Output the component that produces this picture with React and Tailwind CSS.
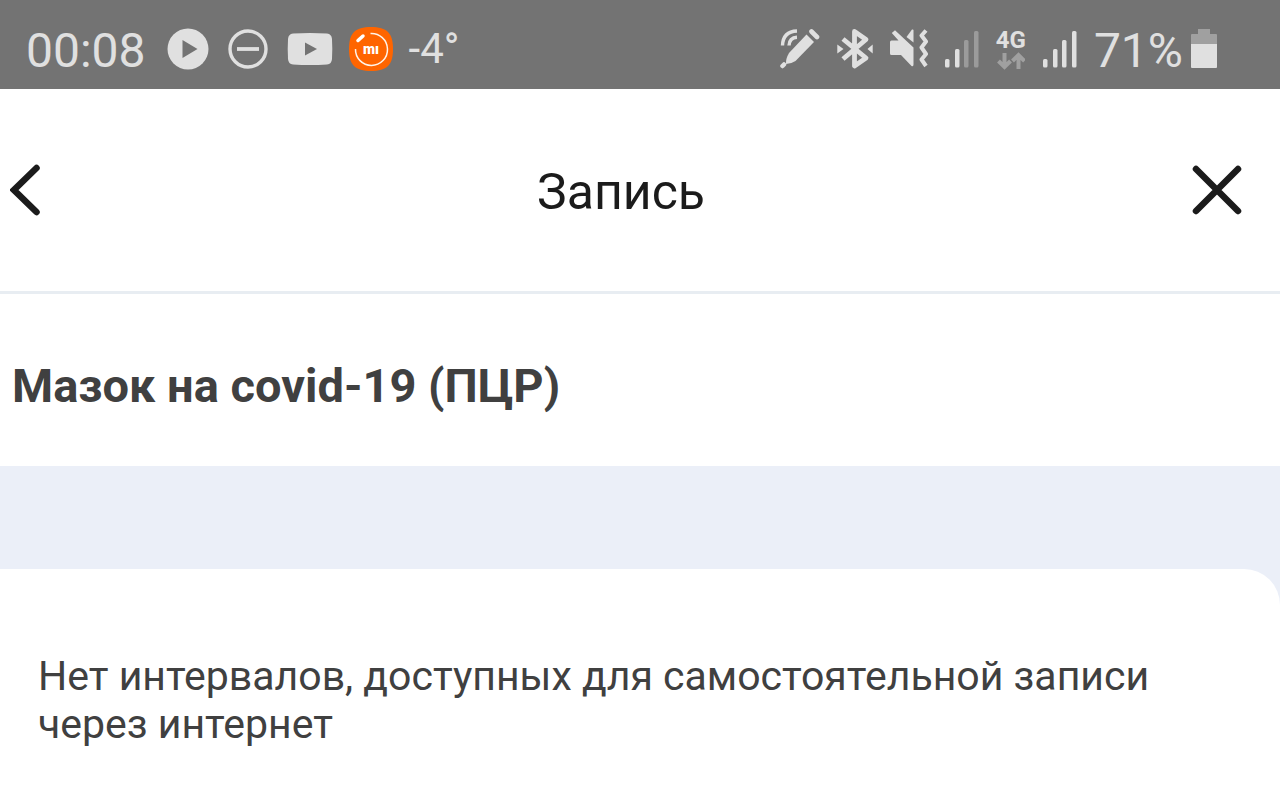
const PlayIcon = () => (
  <svg viewBox="0 0 42 42" className="size-[42px]" aria-hidden="true">
    <circle cx="21" cy="21" r="20.5" fill="#e0e0e0" />
    <path d="M15.5 12v18l15-9z" fill="#737373" />
  </svg>
);

const DoNotDisturbIcon = () => (
  <svg viewBox="0 0 40 40" className="size-10" fill="none" stroke="#e0e0e0" aria-hidden="true">
    <circle cx="20" cy="20" r="18" strokeWidth="3.4" />
    <path d="M9 20h22" strokeWidth="3.8" />
  </svg>
);

const VideoIcon = () => (
  <svg viewBox="0 0 46 34" className="h-[34px] w-[46px]" aria-hidden="true">
    <path
      d="M6 1.5Q23 .3 40 1.5Q44.600 2 45 7Q45.600 17 45 27Q44.600 32 40 32.500Q23 33.700 6 32.500Q1.400 32 1 27Q.4 17 1 7Q1.400 2 6 1.500z"
      fill="#e0e0e0"
    />
    <path d="M18 10.500v13l12-6.500z" fill="#737373" />
  </svg>
);

const MiIcon = () => (
  <svg viewBox="0 0 44 44" className="size-11" aria-label="Mi" role="img">
    <path d="M22 0C38 0 44 6 44 22S38 44 22 44 0 38 0 22 6 0 22 0z" fill="#ff6500" />
    <path d="M21.500 6.500A16 16 0 1 1 6.500 22" fill="none" stroke="#fff3e8" strokeWidth="1.5" />
    <path d="M9 13.500l5-4.500" stroke="#fff" strokeWidth="3.500" strokeLinecap="round" />
    <text
      x="22"
      y="27"
      textAnchor="middle"
      fill="#fff"
      className="font-['Roboto',sans-serif] text-[14px] font-black"
    >
      mı
    </text>
  </svg>
);

const PenIcon = () => (
  <svg viewBox="0 0 40 42" className="h-[42px] w-10" fill="none" stroke="#e0e0e0" aria-hidden="true">
    <path d="M2.500 17.500Q3 3.500 17 3" strokeWidth="3.4" />
    <path d="M9 17.500Q9.500 9.500 17 9.200" strokeWidth="3.4" />
    <path d="M26.500 6.500l7.500 7.500L15.500 33Q11 36 6 36Q5.500 31 9 25z" fill="#e0e0e0" stroke="none" />
    <path d="M31.500 3.500l5.500 5.500" strokeWidth="4.600" strokeLinecap="round" />
    <path d="M4 36.500l-1.500 1.500" strokeWidth="4.500" strokeLinecap="round" />
  </svg>
);

const BluetoothIcon = () => (
  <svg viewBox="0 0 36 42" className="h-[42px] w-9" fill="none" stroke="#e0e0e0" aria-hidden="true">
    <path
      d="M6 11L29 30 17.500 38V3.500L29 11.500 6 31"
      strokeWidth="4.800"
      strokeLinejoin="round"
    />
    <path d="M.3 16.500L6.500 21l-6.200 4.500zM35.700 16.500L30.500 21l5.200 4.500z" fill="#e0e0e0" stroke="none" />
  </svg>
);

const MutedVibrateIcon = () => (
  <svg viewBox="0 0 38 42" className="h-[42px] w-[38px]" fill="#e0e0e0" aria-hidden="true">
    <path d="M0 14Q0 12.500 1.500 12.500H8.500L1.800 5 5 2.200 23.500 19.500V36.500Q23.500 39 21.500 38L11 27H1.500Q0 27 0 25.500z" />
    <path d="M23.500 2.500v12L16.500 9 22 1.500Q23.500 1 23.500 2.500z" />
    <path
      d="M36 2.500l-4.500 5 4.500 6-4.500 6 4.500 6.500-4.500 5.500 4.500 6.500"
      fill="none"
      stroke="#e0e0e0"
      strokeWidth="4"
      strokeLinejoin="round"
    />
  </svg>
);

const BARS = [
  { x: 0, y: 30 },
  { x: 10, y: 20 },
  { x: 19, y: 11 },
  { x: 29, y: 2 },
];

const SignalIcon = ({ level }) => (
  <svg viewBox="0 0 34 40" className="h-10 w-[34px]" aria-hidden="true">
    {BARS.map((bar, i) => (
      <rect
        key={bar.x}
        x={bar.x}
        y={bar.y}
        width="4.5"
        height={38.5 - bar.y}
        rx="1.5"
        fill={i < level ? "#e0e0e0" : "#9b9b9b"}
      />
    ))}
  </svg>
);

const DataArrowsIcon = () => (
  <svg viewBox="0 0 28 18" className="h-[18px] w-7" fill="none" stroke="#a0a0a0" strokeWidth="4" aria-hidden="true">
    <path d="M7.500 1v14M1.500 9l6 6 6-6M21.500 17V4M15.500 9l6-6 6 6" />
  </svg>
);

const BatteryIcon = () => (
  <svg viewBox="0 0 26 40" className="h-10 w-[26px]" aria-hidden="true">
    <path d="M7 0h12v5h6q1 0 1 1v10H0V6q0-1 1-1h6z" fill="#a0a0a0" />
    <path d="M0 15h26v23q0 1-1 1H1q-1 0-1-1z" fill="#e0e0e0" />
  </svg>
);

const StatusBar = () => (
  <div className="flex h-[89px] items-center justify-between bg-[#737373] pt-2 pr-[63px] pl-[26px] text-[#e0e0e0]">
    <div className="flex items-center gap-[21px]">
      <span className="pt-1 text-[48px] leading-none">00:08</span>
      <div className="flex items-center gap-[19px]">
        <PlayIcon />
        <DoNotDisturbIcon />
        <div className="flex items-center gap-4">
          <VideoIcon />
          <MiIcon />
          <span className="text-[42px] leading-none">-4°</span>
        </div>
      </div>
    </div>

    <div className="flex items-center gap-[17px]">
      <PenIcon />
      <BluetoothIcon />
      <MutedVibrateIcon />
      <SignalIcon level={2} />
      <div className="flex flex-col items-center">
        <span className="text-[24px] leading-6 font-bold">4G</span>
        <DataArrowsIcon />
      </div>
      <SignalIcon level={4} />
      <div className="flex items-center gap-2">
        <span className="pt-1 text-[48px] leading-none">71%</span>
        <BatteryIcon />
      </div>
    </div>
  </div>
);

const Header = () => (
  <header className="flex h-[205px] items-center justify-between border-b-3 border-[#e8edf2] pr-[38px] pl-[10px] text-[#1b1b1b]">
    <button type="button" aria-label="Назад" className="w-10">
      <svg viewBox="0 0 40 52" className="h-[52px] w-10" aria-hidden="true">
        <path
          d="M26.500 4L4 26 26.500 48"
          fill="none"
          stroke="currentColor"
          strokeWidth="6.500"
          strokeLinecap="round"
        />
      </svg>
    </button>
    <h1 className="pt-1 text-[50px] leading-[60px]">Запись</h1>
    <button type="button" aria-label="Закрыть">
      <svg viewBox="0 0 50 50" className="size-[50px]" aria-hidden="true">
        <path
          d="M4 4l42 42M46 4L4 46"
          fill="none"
          stroke="currentColor"
          strokeWidth="6.500"
          strokeLinecap="round"
        />
      </svg>
    </button>
  </header>
);

const App = () => (
  <div className="flex min-h-screen flex-col bg-white font-['Roboto',sans-serif]">
    <StatusBar />
    <Header />
    <main className="flex flex-1 flex-col text-[#404040]">
      <h2 className="px-3 pt-[62px] pb-[50px] text-[47px] leading-[60px] font-bold">
        Мазок на covid-19 (ПЦР)
      </h2>
      <div className="flex flex-1 flex-col bg-[#ebeff8] pt-[103px]">
        <section className="flex-1 rounded-tr-[36px] bg-white px-[38px] pt-[83px] pb-12">
          <p className="text-[41px] leading-[48px]">
            Нет интервалов, доступных для самостоятельной записи через интернет
          </p>
        </section>
      </div>
    </main>
  </div>
);

export default App;
